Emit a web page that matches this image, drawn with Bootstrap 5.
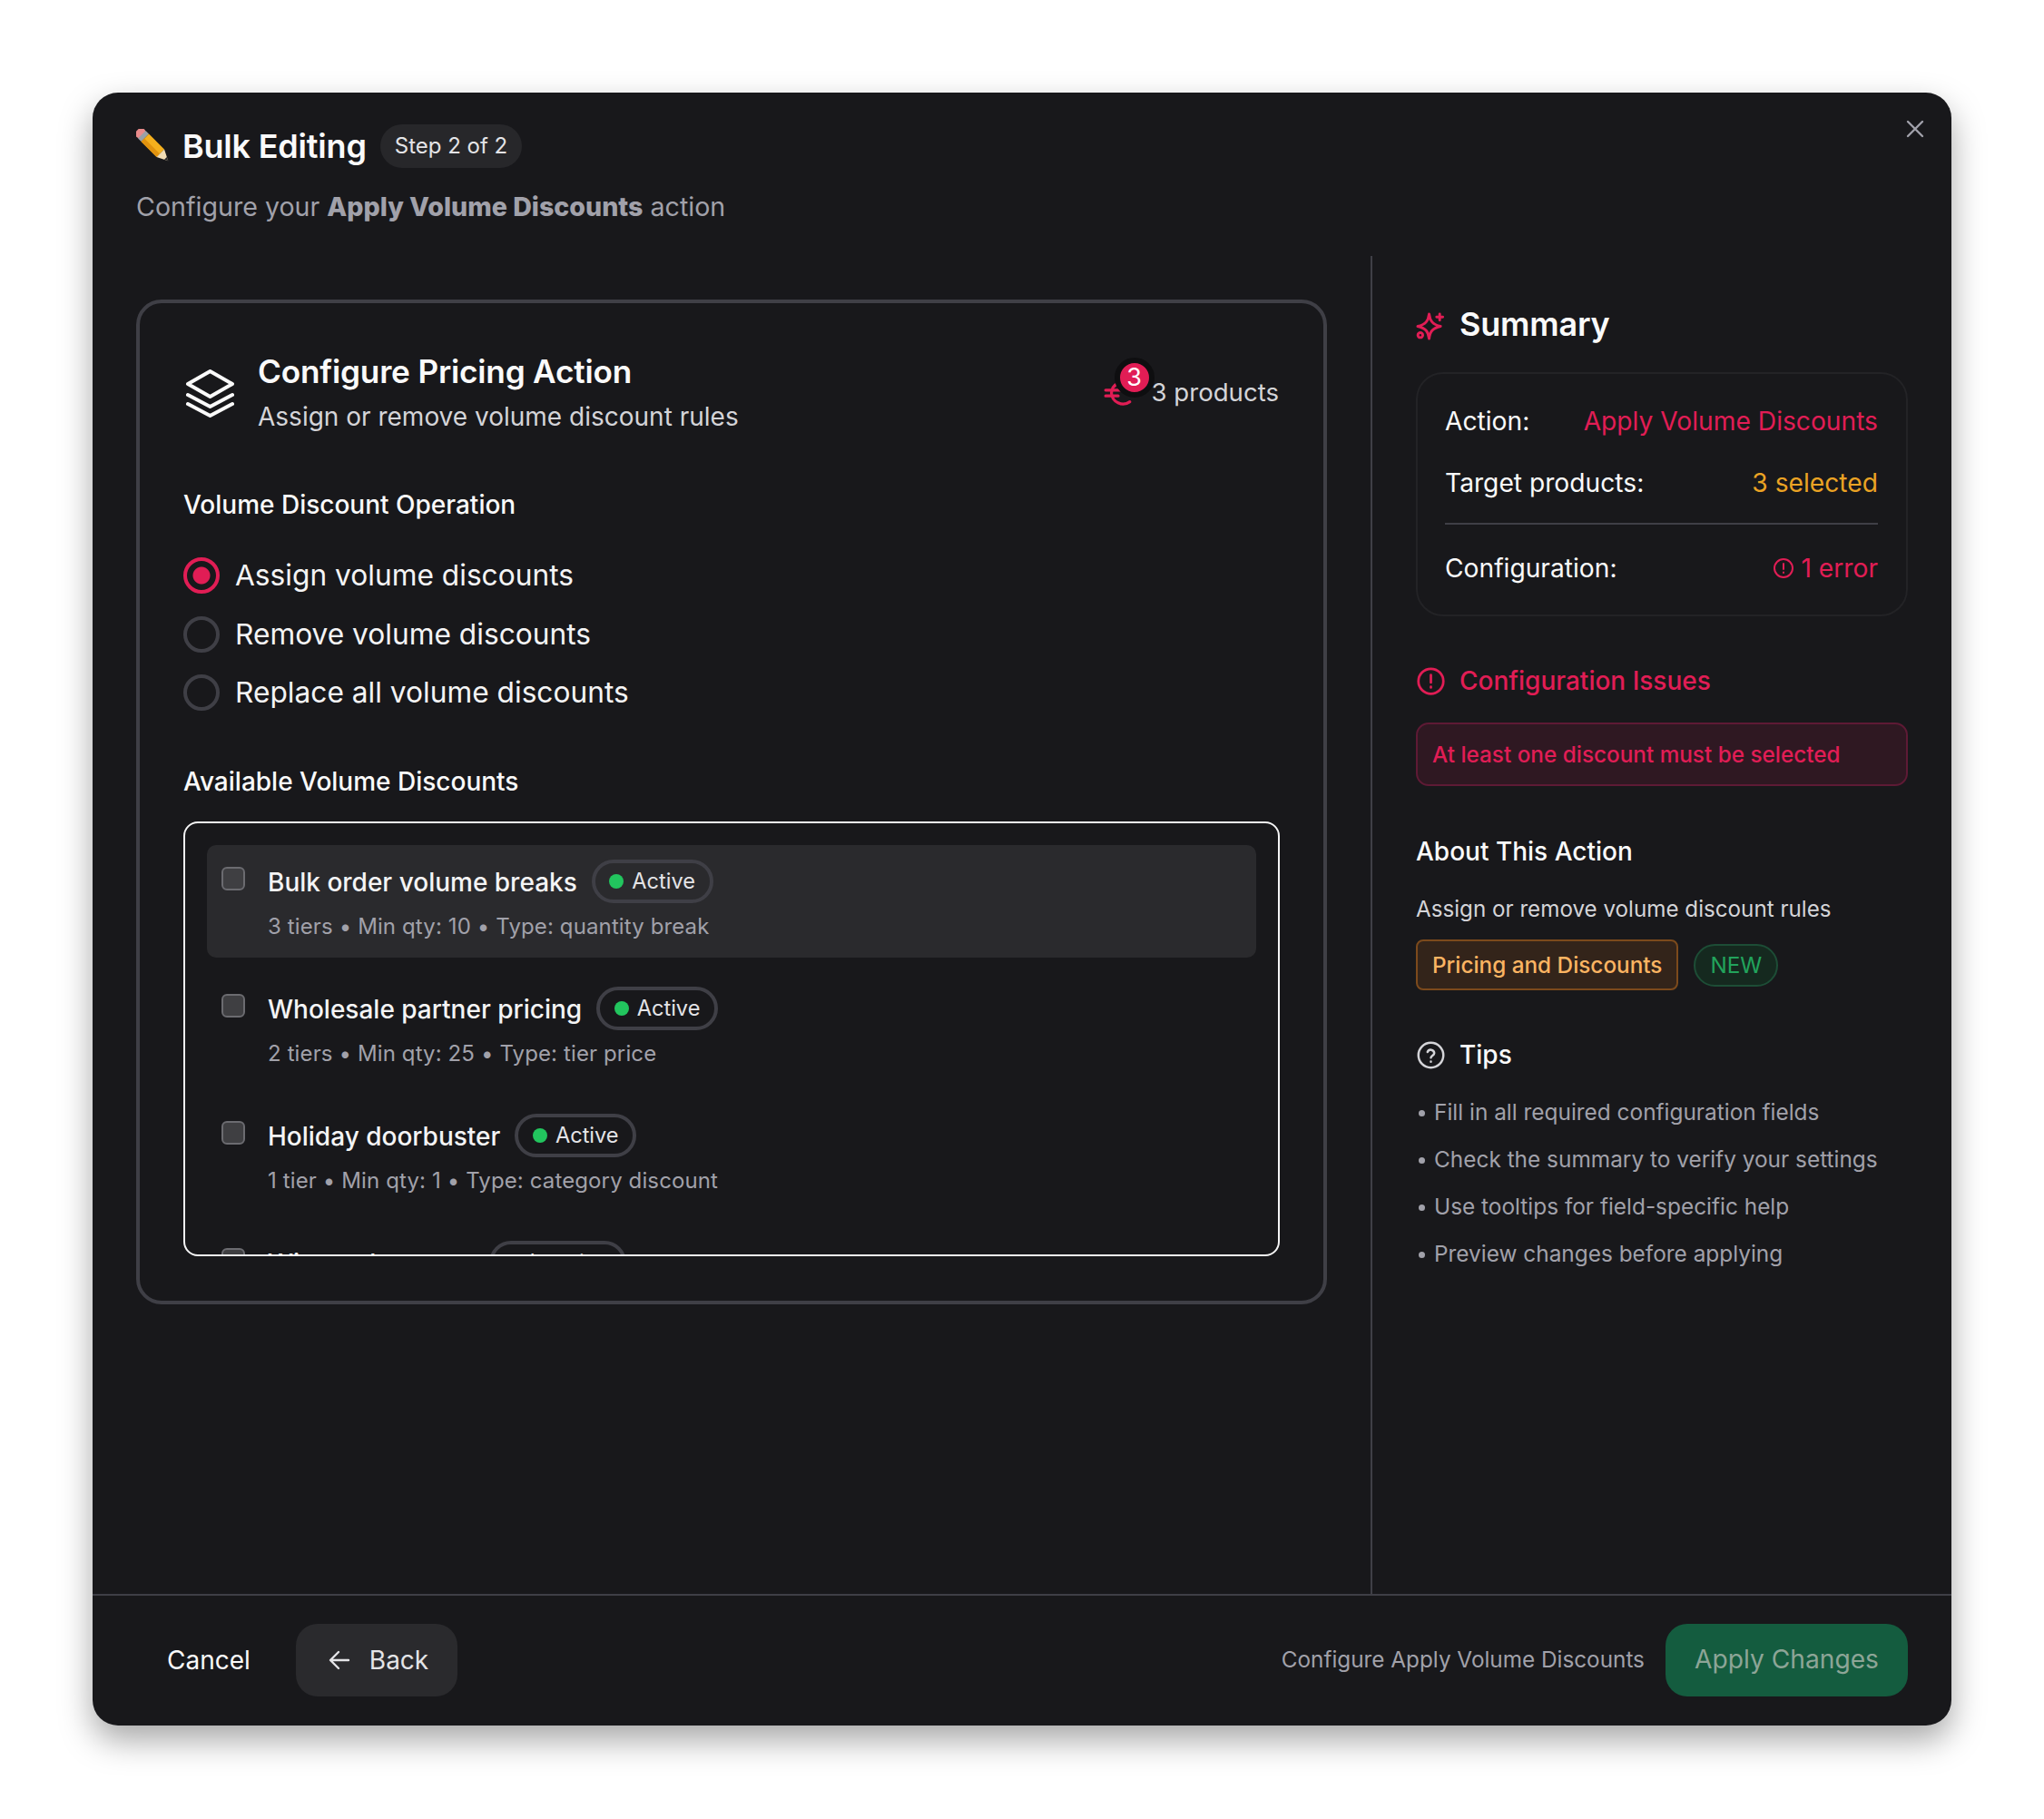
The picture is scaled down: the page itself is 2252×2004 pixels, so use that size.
<!DOCTYPE html>
<html lang="en">
<head>
    <meta charset="UTF-8">
    <title>Bulk Editing</title>
    <link href="https://cdn.jsdelivr.net/npm/bootstrap@5.3.0/dist/css/bootstrap.min.css" rel="stylesheet">
    <style>
        body {
            background-color: #ffffff;
            font-family: 'Inter', 'Liberation Sans', sans-serif;
            color: #fafafa;
            padding: 102px 0 103px 102px;
        }

        .bulk-modal {
            width: 2048px;
            height: 1799px;
            background-color: #18181b;
            border-radius: 28px;
            box-shadow: 0 16px 36px rgba(0, 0, 0, 0.35);
        }

        .bulk-header { height: 180px; padding: 35px 48px 0; }
        .bulk-title { font-size: 36px; font-weight: 600; line-height: 48px; margin: 0 0 0 13px; letter-spacing: -0.2px; }
        .bulk-step { height: 48px; padding: 0 16px; margin-left: 15px; border-radius: 24px; background-color: #27272a; font-size: 24px; font-weight: 400; color: #e4e4e7; }
        .bulk-sub { margin: 21px 0 0; font-size: 28.6px; line-height: 44px; color: #a1a1aa; }
        .bulk-sub strong { font-weight: 800; }
        .bulk-close { top: 29px; right: 29px; width: 22px; height: 22px; stroke: #a1a1aa; }

        .bulk-main { min-height: 0; }
        .bulk-left { width: 1408px; padding: 48px 48px 0 48px; }
        .bulk-right { width: 640px; padding: 52px 48px 0 48px; border-left: 2px solid #3f3f46; }

        .op-card { height: 1107px; padding: 51px 48px 48px; border: 4px solid #3f3f46; border-radius: 28px; }
        .op-head { height: 88px; margin-bottom: 63px; }
        .op-icon { width: 55px; height: 55px; margin: 21px 25px 0 2px; stroke: #fafafa; }
        .op-title { font-size: 35.2px; font-weight: 600; line-height: 48px; margin: 0; letter-spacing: -0.2px; }
        .op-desc { font-size: 28px; line-height: 44px; color: #d4d4d8; margin: 4px 0 0; }
        .op-count { font-size: 27.6px; color: #d4d4d8; margin: 26px 1px 0 0; }
        .euro-wrap { width: 51px; height: 44px; }
        .euro { left: -2px; top: 6px; width: 32px; height: 32px; stroke: #e11d55; }
        .euro-badge { left: 10px; top: -17px; width: 44px; height: 44px; line-height: 32px; border: 6px solid #0e0e10; border-radius: 50%; background-color: #e11d55; color: #fff; font-size: 27px; text-align: center; }

        .field-label { font-size: 28px; font-weight: 500; line-height: 40px; margin: 0; }
        .op-radios { margin: 26px 0 45px; }
        .op-radios .form-check { display: flex; align-items: center; height: 64.5px; padding-left: 0; margin: 0; }
        .op-radios .form-check-input { flex: none; width: 40px; height: 40px; margin: 0 17px 0 0; float: none; background-color: transparent; border: 4px solid #3f3f46; }
        .op-radios .form-check-input:checked { border-color: #e11d55; background-image: radial-gradient(circle, #e11d55 0 9px, transparent 10px); background-size: auto; }
        .op-radios .form-check-label { font-size: 31.7px; color: #f4f4f5; }

        .discount-box { height: 479px; margin-top: 24px; padding: 24px; border: 2px solid #f4f4f5; border-radius: 16px; }
        .discount-item { flex: none; height: 124px; padding: 16px 16px 0; border-radius: 10px; }
        .discount-item.hovered { background-color: #2a2a2d; }
        .discount-item .form-check-input { flex: none; width: 26px; height: 26px; margin: 8px 25px 0 0; background-color: #3f3f42; border: 2px solid #6b6b70; border-radius: 6px; }
        .discount-name { font-size: 28px; font-weight: 500; margin: 2px 16px 0 0; color: #f4f4f5; }
        .discount-meta { font-size: 24px; line-height: 34px; margin-top: 9px; color: #a1a1aa; letter-spacing: 0.12px; }
        .status-pill { height: 48px; padding: 0 15.5px; border: 4px solid #3f3f46; border-radius: 24px; font-size: 23.6px; color: #e4e4e7; }
        .status-dot { width: 16px; height: 16px; margin-right: 9px; border-radius: 50%; background-color: #22c55e; }
        .status-dot.off { background-color: #71717a; }

        .side-title { height: 48px; margin: 0; font-size: 36px; font-weight: 600; letter-spacing: -0.2px; }
        .side-icon { flex: none; width: 33px; height: 33px; margin-right: 15px; }
        .summary-box { height: 269px; margin-top: 28px; padding: 28px 31px 0 30px; border: 2px solid #232326; border-radius: 30px; font-size: 28.2px; }
        .summary-row { height: 48px; margin-bottom: 20px; }
        .summary-box hr { margin: 18px 0 24px; border-color: #3f3f46; opacity: 1; border-top-width: 2px; }
        .text-rose { color: #e11d55; }
        .text-amber { color: #eba324; }
        .err-icon { width: 24px; height: 24px; margin-right: 7px; stroke: #e11d55; }
        .issue-title { margin-top: 51px; font-size: 28px; font-weight: 500; color: #e11d55; height: 40px; }
        .issue-box { height: 70px; margin-top: 26px; padding: 0 16px; border: 2px solid #5e1a35; border-radius: 14px; background-color: #2f1822; color: #e11d55; font-size: 24.3px; font-weight: 500; }
        .about-title { margin: 52px 0 0; font-size: 28px; font-weight: 500; line-height: 40px; }
        .about-desc { margin: 23px 0 0; font-size: 24.2px; line-height: 41px; color: #d4d4d8; }
        .tag-row { margin-top: 13px; }
        .tag-cat { height: 56px; padding: 0 16px; border: 2px solid #7c4a1c; border-radius: 8px; background-color: #33241a; color: #fbb462; font-size: 24.3px; font-weight: 500; }
        .tag-new { height: 47px; padding: 0 16px; margin-left: 17px; border: 2px solid #1d4d36; border-radius: 24px; background-color: #15291f; color: #22a35c; font-size: 24.3px; }
        .tips-title { margin-top: 51px; font-size: 28px; font-weight: 500; height: 40px; }
        .tips-list { margin-top: 17px; font-size: 24.4px; color: #a1a1aa; }
        .tips-list li { height: 52px; line-height: 52px; }
        .tips-list li span { display: inline-block; width: 7px; height: 7px; margin: 0 10px 4px 3px; border-radius: 50%; background-color: #a1a1aa; }

        .bulk-footer { height: 145px; padding: 0 48px 2px 50px; border-top: 2px solid #3f3f46; }
        .bulk-footer .btn { height: 80px; padding: 0 32px; border: 0; border-radius: 24px; font-size: 28px; display: flex; align-items: center; }
        .btn-cancel { color: #fafafa; background: transparent; margin-right: 18px; }
        .bulk-footer .btn-back { padding-left: 36px; background-color: #2a2a2d; color: #e4e4e7; }
        .btn-back svg { width: 24px; height: 26px; margin-right: 21px; stroke: #e4e4e7; }
        .footer-note { font-size: 24.3px; color: #a1a1aa; margin-right: 23px; }
        .bulk-footer .btn-apply, .bulk-footer .btn-apply:disabled { font-size: 28.2px; background-color: #145c3f; color: #8da597; opacity: 1; }
    </style>
</head>
<body>

    <div class="bulk-modal position-relative d-flex flex-column">

        <!-- Header -->
        <div class="bulk-header flex-shrink-0">
            <svg class="bulk-close position-absolute" viewBox="0 0 22 22" fill="none" stroke-width="2.4" stroke-linecap="round"><path d="M3 3l16 16M19 3L3 19"/></svg>
            <div class="d-flex align-items-center">
                <svg width="38" height="38" viewBox="0 0 38 38">
                    <g transform="rotate(45 19 19)">
                        <rect x="-6" y="13" width="8" height="12" rx="3" fill="#e88a8a"/>
                        <rect x="1" y="13" width="5" height="12" fill="#9aa0a6"/>
                        <rect x="6" y="13" width="24" height="12" fill="#f5b01d"/>
                        <rect x="6" y="20" width="24" height="5" fill="#e0920f"/>
                        <path d="M30 13L42 19 30 25z" fill="#f1dcb4"/>
                        <path d="M38 17l4 2-4 2z" fill="#26262a"/>
                    </g>
                </svg>
                <h1 class="bulk-title">Bulk Editing</h1>
                <span class="bulk-step d-inline-flex align-items-center">Step 2 of 2</span>
            </div>
            <p class="bulk-sub">Configure your <strong>Apply Volume Discounts</strong> action</p>
        </div>

        <!-- Main -->
        <div class="bulk-main d-flex flex-grow-1">
            <div class="bulk-left">
                <div class="op-card">
                    <div class="op-head d-flex">
                        <svg class="op-icon flex-shrink-0" viewBox="0 0 55 55" fill="none" stroke-width="4" stroke-linejoin="round" stroke-linecap="round">
                            <path d="M27.500 3L52 17 27.500 31 3 17z"/>
                            <path d="M3 29l24.500 13L52 29"/>
                            <path d="M3 39l24.500 13L52 39"/>
                        </svg>
                        <div class="flex-grow-1">
                            <h2 class="op-title">Configure Pricing Action</h2>
                            <p class="op-desc">Assign or remove volume discount rules</p>
                        </div>
                        <div class="op-count d-flex align-items-center align-self-start">
                            <span class="euro-wrap position-relative d-inline-block">
                                <svg class="euro position-absolute" viewBox="0 0 30 30" fill="none" stroke-width="3" stroke-linecap="round"><path d="M27 6A12 12 0 0 0 8 15a12 12 0 0 0 19 9M2 12h15M2 18h13"/></svg>
                                <span class="euro-badge position-absolute">3</span>
                            </span>
                            <span>3 products</span>
                        </div>
                    </div>

                    <p class="field-label">Volume Discount Operation</p>
                    <div class="op-radios">
                        <div class="form-check">
                            <input class="form-check-input" type="radio" name="op" id="opAssign" checked>
                            <label class="form-check-label" for="opAssign">Assign volume discounts</label>
                        </div>
                        <div class="form-check">
                            <input class="form-check-input" type="radio" name="op" id="opRemove">
                            <label class="form-check-label" for="opRemove">Remove volume discounts</label>
                        </div>
                        <div class="form-check">
                            <input class="form-check-input" type="radio" name="op" id="opReplace">
                            <label class="form-check-label" for="opReplace">Replace all volume discounts</label>
                        </div>
                    </div>

                    <p class="field-label">Available Volume Discounts</p>
                    <div class="discount-box d-flex flex-column gap-3 overflow-hidden">
                        <div class="discount-item hovered d-flex">
                            <input class="form-check-input" type="checkbox">
                            <div>
                                <div class="d-flex align-items-center">
                                    <span class="discount-name">Bulk order volume breaks</span>
                                    <span class="status-pill d-inline-flex align-items-center"><span class="status-dot"></span>Active</span>
                                </div>
                                <div class="discount-meta">3 tiers • Min qty: 10 • Type: quantity break</div>
                            </div>
                        </div>
                        <div class="discount-item d-flex">
                            <input class="form-check-input" type="checkbox">
                            <div>
                                <div class="d-flex align-items-center">
                                    <span class="discount-name">Wholesale partner pricing</span>
                                    <span class="status-pill d-inline-flex align-items-center"><span class="status-dot"></span>Active</span>
                                </div>
                                <div class="discount-meta">2 tiers • Min qty: 25 • Type: tier price</div>
                            </div>
                        </div>
                        <div class="discount-item d-flex">
                            <input class="form-check-input" type="checkbox">
                            <div>
                                <div class="d-flex align-items-center">
                                    <span class="discount-name">Holiday doorbuster</span>
                                    <span class="status-pill d-inline-flex align-items-center"><span class="status-dot"></span>Active</span>
                                </div>
                                <div class="discount-meta">1 tier • Min qty: 1 • Type: category discount</div>
                            </div>
                        </div>
                        <div class="discount-item d-flex">
                            <input class="form-check-input" type="checkbox">
                            <div>
                                <div class="d-flex align-items-center">
                                    <span class="discount-name">Winter clearance</span>
                                    <span class="status-pill d-inline-flex align-items-center"><span class="status-dot off"></span>Inactive</span>
                                </div>
                            </div>
                        </div>
                    </div>
                </div>
            </div>

            <!-- Summary -->
            <div class="bulk-right">
                <h3 class="side-title d-flex align-items-center">
                    <svg class="side-icon" viewBox="10 10 34 34" fill="none" stroke="#e11d55" stroke-width="3" stroke-linecap="round" stroke-linejoin="round">
                        <path d="M25 14c1 8 4 12 13 14-9 2-12 6-13 14-1-8-4-12-13-14 9-2 12-6 13-14z"/>
                        <path d="M37 14v7M33.500 17.500h7"/>
                        <circle cx="15" cy="38" r="2.800"/>
                    </svg>
                    Summary
                </h3>
                <div class="summary-box">
                    <div class="summary-row d-flex justify-content-between align-items-center"><span>Action:</span><span class="text-rose">Apply Volume Discounts</span></div>
                    <div class="summary-row d-flex justify-content-between align-items-center"><span>Target products:</span><span class="text-amber">3 selected</span></div>
                    <hr>
                    <div class="summary-row d-flex justify-content-between align-items-center">
                        <span>Configuration:</span>
                        <span class="text-rose d-inline-flex align-items-center">
                            <svg class="err-icon" viewBox="0 0 24 24" fill="none" stroke-width="2" stroke-linecap="round"><circle cx="12" cy="12" r="10"/><path d="M12 7v6M12 16.500v.5"/></svg>1 error
                        </span>
                    </div>
                </div>

                <div class="issue-title d-flex align-items-center">
                    <svg class="side-icon" viewBox="0 0 24 24" fill="none" stroke="#e11d55" stroke-width="2" stroke-linecap="round"><circle cx="12" cy="12" r="10"/><path d="M12 7v6M12 16.500v.5"/></svg>
                    Configuration Issues
                </div>
                <div class="issue-box d-flex align-items-center">At least one discount must be selected</div>

                <p class="about-title">About This Action</p>
                <p class="about-desc">Assign or remove volume discount rules</p>
                <div class="tag-row d-flex align-items-center">
                    <span class="tag-cat d-inline-flex align-items-center">Pricing and Discounts</span>
                    <span class="tag-new d-inline-flex align-items-center">NEW</span>
                </div>

                <div class="tips-title d-flex align-items-center">
                    <svg class="side-icon" viewBox="0 0 24 24" fill="none" stroke="#d4d4d8" stroke-width="1.800" stroke-linecap="round"><circle cx="12" cy="12" r="10"/><path d="M9.300 9.500a2.800 2.800 0 0 1 5.400.8c0 1.800-2.700 2.200-2.700 3.700M12 17v.2"/></svg>
                    Tips
                </div>
                <ul class="tips-list list-unstyled">
                    <li><span></span>Fill in all required configuration fields</li>
                    <li><span></span>Check the summary to verify your settings</li>
                    <li><span></span>Use tooltips for field-specific help</li>
                    <li><span></span>Preview changes before applying</li>
                </ul>
            </div>
        </div>

        <!-- Footer -->
        <div class="bulk-footer d-flex align-items-center flex-shrink-0">
            <button type="button" class="btn btn-cancel">Cancel</button>
            <button type="button" class="btn btn-back">
                <svg viewBox="0 0 24 26" fill="none" stroke-width="2.400" stroke-linecap="round" stroke-linejoin="round"><path d="M22 13H3M11 4l-9 9 9 9"/></svg>
                Back
            </button>
            <span class="footer-note ms-auto">Configure Apply Volume Discounts</span>
            <button type="button" class="btn btn-apply" disabled>Apply Changes</button>
        </div>
    </div>

    <script src="https://cdn.jsdelivr.net/npm/bootstrap@5.3.0/dist/js/bootstrap.bundle.min.js"></script>
</body>
</html>
